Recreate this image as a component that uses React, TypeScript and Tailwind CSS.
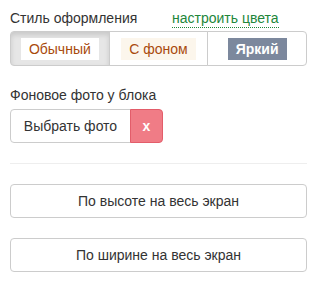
export default function App() {
  const styles = [
    { id: 'normal', label: 'Обычный', box: 'bg-white text-[#a94a0c]' },
    { id: 'bg', label: 'С фоном', box: 'bg-[#fcf6ec] text-[#a94a0c]' },
    { id: 'bright', label: 'Яркий', box: 'bg-[#7c889d] text-white font-bold' },
  ]
  const active = 'normal'

  return (
    <div className="min-h-screen bg-white px-[10px] pt-[8px] text-[14px] text-[#333] font-['Liberation_Sans',Arial,sans-serif]">
      {/* Style picker */}
      <div className="flex items-baseline leading-[20px]">
        <span className="w-[162px]">Стиль оформления</span>
        <a className="text-[#22863a] border-b border-dotted border-[#22863a] leading-[17px]">настроить цвета</a>
      </div>
      <div className="mt-[3px] flex h-[35px]">
        {styles.map((s, i) => (
          <button
            key={s.id}
            className={`flex-1 flex items-center justify-center border border-[#ccc] ${
              i === 0 ? 'rounded-l-[4px]' : '-ml-px'
            } ${i === styles.length - 1 ? 'rounded-r-[4px]' : ''} ${
              s.id === active ? 'bg-[#e6e6e6] border-[#adadad] shadow-[inset_0_3px_5px_rgba(0,0,0,0.125)]' : 'bg-white'
            }`}
          >
            <span className={`px-[8px] h-[22px] leading-[22px] ${s.box}`}>{s.label}</span>
          </button>
        ))}
      </div>

      {/* Background photo */}
      <div className="mt-[19px] leading-[20px]">Фоновое фото у блока</div>
      <div className="mt-[4px] flex h-[34px]">
        <button className="w-[121px] border border-[#ccc] rounded-l-[4px] bg-white text-[#333]">Выбрать фото</button>
        <button className="w-[33px] -ml-px border border-[#e35d6a] rounded-r-[4px] bg-[#f07c86] text-white font-bold">x</button>
      </div>

      <div className="mt-[20px] h-px bg-[#eee]" />

      <button className="mt-[20px] w-full h-[34px] border border-[#ccc] rounded-[4px] bg-white text-[#333]">
        По высоте на весь экран
      </button>
      <button className="mt-[20px] w-full h-[34px] border border-[#ccc] rounded-[4px] bg-white text-[#333]">
        По ширине на весь экран
      </button>
    </div>
  )
}
